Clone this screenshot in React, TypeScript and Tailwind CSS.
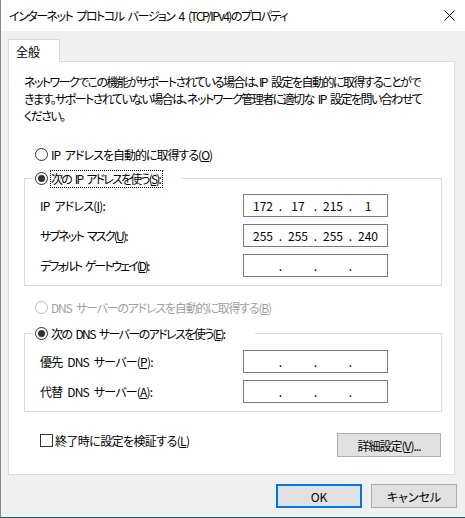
import React from "react";

function Radio({ checked, disabled }: { checked?: boolean; disabled?: boolean }) {
  return (
    <span
      className={
        "w-[13px] h-[13px] rounded-full border bg-white flex items-center justify-center shrink-0 " +
        (disabled ? "border-[#bcbcbc]" : "border-[#333333]")
      }
    >
      {checked && <span className="w-[7px] h-[7px] rounded-full bg-[#333333]" />}
    </span>
  );
}

function IpField({ values }: { values: string[] }) {
  return (
    <div className="w-[145px] h-[23px] border border-[#7a7a7a] bg-white flex items-center pl-[4px] shrink-0 tracking-normal">
      {values.map((v, i) => (
        <React.Fragment key={i}>
          <span className="w-[30px] text-center">{v}</span>
          {i < 3 && <span className="w-[5px] text-center">.</span>}
        </React.Fragment>
      ))}
    </div>
  );
}

export default function App() {
  const empty = ["", "", "", ""];
  return (
    <div className="w-[465px] h-[518px] flex flex-col bg-[#f0f0f0] border-l border-b border-l-[#8a8a8a] border-b-[#1b5a7a] text-[12px] leading-[17px] text-black font-['Noto_Sans_CJK_JP',sans-serif] [font-feature-settings:'palt'] [word-spacing:3px] overflow-hidden">
      {/* Title bar */}
      <div className="h-[31px] bg-white flex items-center justify-between pl-[8px] pr-[10px] shrink-0">
        <span className="whitespace-nowrap tracking-[-1.5px]">
          インターネット プロトコル バージョン 4 (TCP/IPv4)のプロパティ
        </span>
        <svg width="11" height="11" viewBox="0 0 11 11" className="shrink-0">
          <path d="M0.5 0.5 L10.5 10.5 M10.5 0.5 L0.5 10.5" stroke="#000" strokeWidth="1" fill="none" />
        </svg>
      </div>

      {/* Body */}
      <div className="flex-1 flex flex-col pt-[8px] pl-[7px]">
        <div className="w-[52px] h-[23px] bg-white border border-b-0 border-[#d9d9d9] pl-[7px] flex items-center relative z-10 -mb-px">
          全般
        </div>
        <div className="w-[447px] h-[414px] bg-white border border-[#d9d9d9] pt-[11px] pl-[15px] pr-[12px] flex flex-col shrink-0">
          <p className="whitespace-nowrap leading-[17px] tracking-[-1.55px]">
            ネットワークでこの機能がサポートされている場合は、IP 設定を自動的に取得することがで
            <br />
            きます。サポートされていない場合は、ネットワーク管理者に適切な IP 設定を問い合わせて
            <br />
            ください。
          </p>

          <div className="mt-[22px] h-[17px] flex items-center gap-[3px] pl-[11px]">
            <Radio />
            <span className="tracking-[-1px]">
              IP アドレスを自動的に取得する(<span className="underline">O</span>)
            </span>
          </div>

          <fieldset className="mt-[7px] border border-[#dcdcdc] pl-[15px] pb-[8px]">
            <legend className="-ml-[6px] pl-[1px] pr-[19px] h-[17px] flex items-center gap-[3px]">
              <Radio checked />
              <span className="h-[16px] leading-[16px] outline-1 outline-dotted outline-black tracking-[-1.8px] pr-[2px]">
                次の IP アドレスを使う(<span className="underline">S</span>):
              </span>
            </legend>
            <div className="flex items-center mt-[7px]">
              <span className="w-[203px] shrink-0 tracking-[-0.8px]">
                IP アドレス(<span className="underline">I</span>):
              </span>
              <IpField values={["172", "17", "215", "1"]} />
            </div>
            <div className="flex items-center mt-[7px]">
              <span className="w-[203px] shrink-0 tracking-[-1.8px]">
                サブネット マスク(<span className="underline">U</span>):
              </span>
              <IpField values={["255", "255", "255", "240"]} />
            </div>
            <div className="flex items-center mt-[7px]">
              <span className="w-[203px] shrink-0 tracking-[-2px]">
                デフォルト ゲートウェイ(<span className="underline">D</span>):
              </span>
              <IpField values={empty} />
            </div>
          </fieldset>

          <div className="mt-[13px] h-[17px] flex items-center gap-[3px] pl-[11px] text-[#a0a0a0]">
            <Radio disabled />
            <span className="tracking-[-1.2px]">
              DNS サーバーのアドレスを自動的に取得する(<span className="underline">B</span>)
            </span>
          </div>

          <fieldset className="mt-[9px] border border-[#dcdcdc] pl-[15px] pb-[8px]">
            <legend className="-ml-[6px] pl-[1px] pr-[30px] h-[17px] flex items-center gap-[3px]">
              <Radio checked />
              <span className="tracking-[-1.6px]">
                次の DNS サーバーのアドレスを使う(<span className="underline">E</span>):
              </span>
            </legend>
            <div className="flex items-center mt-[8px]">
              <span className="w-[203px] shrink-0 tracking-[-0.8px]">
                優先 DNS サーバー(<span className="underline">P</span>):
              </span>
              <IpField values={empty} />
            </div>
            <div className="flex items-center mt-[7px]">
              <span className="w-[203px] shrink-0 tracking-[-0.8px]">
                代替 DNS サーバー(<span className="underline">A</span>):
              </span>
              <IpField values={empty} />
            </div>
          </fieldset>

          <div className="mt-[21px] flex items-start justify-between">
            <div className="mt-[1px] pl-[16px] flex items-center gap-[2px] h-[13px]">
              <span className="w-[13px] h-[13px] border border-[#333333] bg-white shrink-0" />
              <span className="tracking-[-0.6px]">
                終了時に設定を検証する(<span className="underline">L</span>)
              </span>
            </div>
            <button className="w-[104px] h-[24px] mr-[1px] border border-[#adadad] bg-[#e1e1e1] flex items-center justify-center tracking-[-1px]">
              詳細設定(<span className="underline">V</span>)...
            </button>
          </div>
        </div>

        <div className="mt-[9px] flex justify-end gap-[9px] pr-[8px]">
          <button className="w-[86px] h-[24px] border-2 border-[#0078d7] bg-[#e1e1e1] flex items-center justify-center">
            OK
          </button>
          <button className="w-[86px] h-[24px] border border-[#adadad] bg-[#e1e1e1] flex items-center justify-center">
            キャンセル
          </button>
        </div>
      </div>
    </div>
  );
}
